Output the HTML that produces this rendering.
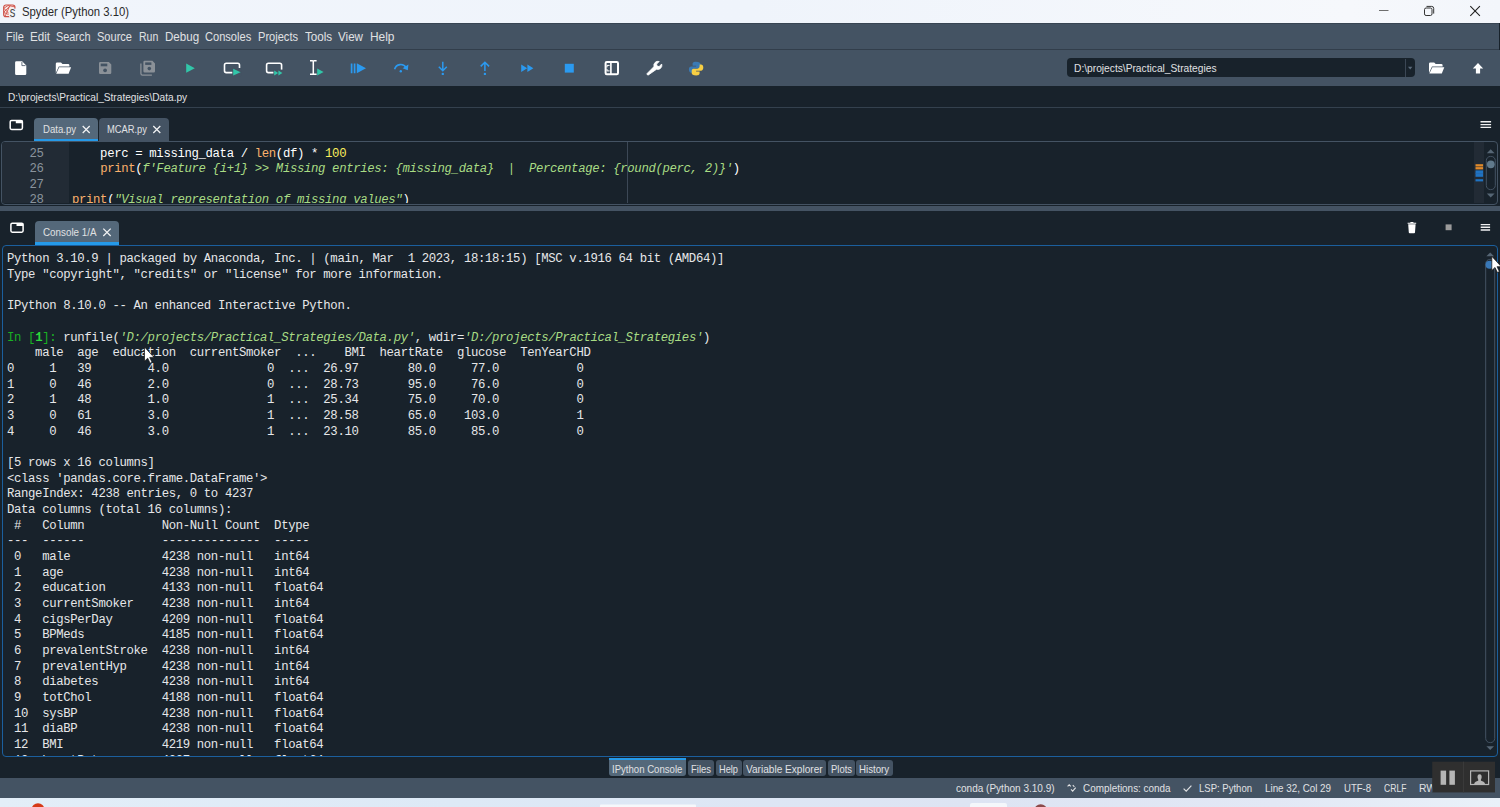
<!DOCTYPE html>
<html lang="en">
<head>
<meta charset="utf-8">
<title>Spyder (Python 3.10)</title>
<style>
*{box-sizing:border-box;margin:0;padding:0}
html,body{width:1500px;height:807px;overflow:hidden;background:#18222b}
body{position:relative;font-family:"Liberation Sans",sans-serif;font-size:12px;color:#e0e1e3}
.abs,.t,.ic{position:absolute}
.t{white-space:nowrap;line-height:1;color:#e0e1e3}
.ic{overflow:visible}
#titlebar{left:0;top:0;width:1500px;height:22.6px;background:linear-gradient(90deg,#f1f5fb,#eff4fb 50%,#f6f8fc 90%,#f3f6fb)}
#menubar{left:0;top:22.6px;width:1499px;height:27.4px;background:#445363;border-bottom:1px solid #323e4b;border-top:1px solid #384553}
#toolbar{left:0;top:50px;width:1500px;height:36px;background:#445363}
#pathrow{left:0;top:86px;width:1500px;height:22px;background:#18222b;border-bottom:1px solid #34414e}
.tab{position:absolute;background:#445363;border-radius:4px 4px 0 0}
.tab.sel{background:#54687a;border-bottom:3px solid #259ae9}
.mono{font-family:"Liberation Mono","DejaVu Sans Mono",monospace;font-size:12.3px;letter-spacing:-0.35px;white-space:pre;line-height:15.645px;color:#e6e7e9}
#editor{left:1px;top:141px;width:1497px;height:63.5px;border:1px solid #445363;border-radius:4px;background:#18222b;overflow:hidden}
#gutter{left:0;top:0;width:67px;height:64px;background:#222b35}
#edge{left:625px;top:0;width:1px;height:64px;background:#3c4856}
#flags{left:1472px;top:0;width:10px;height:64px;background:#222b35}
#splitter{left:0;top:205.6px;width:1500px;height:5.6px;background:#445363}
#console{left:2px;top:245px;width:1496px;height:512.4px;border:1.5px solid #1b5f9d;border-radius:4px;background:#18222b;overflow:hidden}
#statusbar{left:0;top:778px;width:1500px;height:20px;background:#445363}
#taskbar{left:0;top:797.5px;width:1500px;height:10px;background:linear-gradient(90deg,#e3eef8,#dde9f6 30%,#dde4f3 65%,#e2e8f5 85%,#e9f1f9)}
.btab{position:absolute;top:760px;height:16px;background:#445363;border-radius:3px}
.kw{color:#fab16c}.num{color:#faed5c}.str{color:#a8dc84;font-style:italic}
.pr{color:#18b024}.prn{color:#2bd93c;font-weight:bold}
.ln{color:#8a939c}
</style>
</head>
<body>

<div id="titlebar" class="abs"></div>
<div id="menubar" class="abs"></div>
<div id="toolbar" class="abs"></div>
<div id="pathrow" class="abs"></div>
<div class="abs" style="left:1066.5px;top:58.1px;width:348.5px;height:19px;background:#18222b;border-radius:4px"></div>
<div class="abs" style="left:1404.5px;top:58.6px;width:1px;height:18px;background:#3b4755"></div>
<div class="tab sel" style="left:34px;top:118px;width:63.5px;height:24px"></div>
<div class="tab" style="left:99px;top:118px;width:70px;height:22.5px"></div>
<div id="splitter" class="abs"></div>
<div class="tab sel" style="left:35px;top:221px;width:84px;height:24px"></div>
<div id="statusbar" class="abs"></div>
<div id="taskbar" class="abs"></div>
<div class="btab" style="left:608.5px;width:77.5px;top:758px;height:18px;background:#54687a;border-top:2.5px solid #259ae9;border-radius:0 0 3px 3px"></div>
<div class="btab" style="left:687.5px;width:26.5px"></div>
<div class="btab" style="left:715.5px;width:26px"></div>
<div class="btab" style="left:743px;width:83px"></div>
<div class="btab" style="left:827.5px;width:27px"></div>
<div class="btab" style="left:856px;width:37px"></div>

<span class="t" id="ttl" style="left:22px;top:5.50px;font-size:12.4px;color:#2a2a2a;transform:scaleX(0.9138);transform-origin:0 0;">Spyder (Python 3.10)</span>
<span class="t" id="m1" style="left:5.5px;top:30.58px;font-size:12.3px;color:#e0e1e3;transform:scaleX(0.8977);transform-origin:0 0;">File</span>
<span class="t" id="m2" style="left:30px;top:30.58px;font-size:12.3px;color:#e0e1e3;transform:scaleX(0.9433);transform-origin:0 0;">Edit</span>
<span class="t" id="m3" style="left:56.3px;top:30.58px;font-size:12.3px;color:#e0e1e3;transform:scaleX(0.8853);transform-origin:0 0;">Search</span>
<span class="t" id="m4" style="left:97px;top:30.58px;font-size:12.3px;color:#e0e1e3;transform:scaleX(0.8982);transform-origin:0 0;">Source</span>
<span class="t" id="m5" style="left:138.7px;top:30.58px;font-size:12.3px;color:#e0e1e3;transform:scaleX(0.8554);transform-origin:0 0;">Run</span>
<span class="t" id="m6" style="left:164.7px;top:30.58px;font-size:12.3px;color:#e0e1e3;transform:scaleX(0.9407);transform-origin:0 0;">Debug</span>
<span class="t" id="m7" style="left:205.3px;top:30.58px;font-size:12.3px;color:#e0e1e3;transform:scaleX(0.9012);transform-origin:0 0;">Consoles</span>
<span class="t" id="m8" style="left:258px;top:30.58px;font-size:12.3px;color:#e0e1e3;transform:scaleX(0.9005);transform-origin:0 0;">Projects</span>
<span class="t" id="m9" style="left:304.8px;top:30.58px;font-size:12.3px;color:#e0e1e3;transform:scaleX(0.9471);transform-origin:0 0;">Tools</span>
<span class="t" id="m10" style="left:338px;top:30.58px;font-size:12.3px;color:#e0e1e3;transform:scaleX(0.9456);transform-origin:0 0;">View</span>
<span class="t" id="m11" style="left:370px;top:30.58px;font-size:12.3px;color:#e0e1e3;transform:scaleX(0.9685);transform-origin:0 0;">Help</span>
<span class="t" id="pth" style="left:7.5px;top:92.41px;font-size:10.7px;color:#e0e1e3;transform:scaleX(0.9486);transform-origin:0 0;">D:\projects\Practical_Strategies\Data.py</span>
<span class="t" id="cwd" style="left:1073.5px;top:63.11px;font-size:10.7px;color:#e0e1e3;transform:scaleX(0.9558);transform-origin:0 0;">D:\projects\Practical_Strategies</span>
<span class="t" id="tb1" style="left:42.5px;top:124.11px;font-size:10.7px;color:#e0e1e3;transform:scaleX(0.8957);transform-origin:0 0;">Data.py</span>
<span class="t" id="tb2" style="left:107px;top:124.11px;font-size:10.7px;color:#e0e1e3;transform:scaleX(0.8746);transform-origin:0 0;">MCAR.py</span>
<span class="t" id="tb3" style="left:43px;top:227.11px;font-size:10.7px;color:#e0e1e3;transform:scaleX(0.9187);transform-origin:0 0;">Console 1/A</span>
<span class="t" id="b1" style="left:612px;top:763.91px;font-size:10.7px;color:#e0e1e3;transform:scaleX(0.8975);transform-origin:0 0;">IPython Console</span>
<span class="t" id="b2" style="left:691px;top:763.91px;font-size:10.7px;color:#e0e1e3;transform:scaleX(0.8858);transform-origin:0 0;">Files</span>
<span class="t" id="b3" style="left:719px;top:763.91px;font-size:10.7px;color:#e0e1e3;transform:scaleX(0.8643);transform-origin:0 0;">Help</span>
<span class="t" id="b4" style="left:746px;top:763.91px;font-size:10.7px;color:#e0e1e3;transform:scaleX(0.9435);transform-origin:0 0;">Variable Explorer</span>
<span class="t" id="b5" style="left:830.6px;top:763.91px;font-size:10.7px;color:#e0e1e3;transform:scaleX(0.8836);transform-origin:0 0;">Plots</span>
<span class="t" id="b6" style="left:859.4px;top:763.91px;font-size:10.7px;color:#e0e1e3;transform:scaleX(0.9078);transform-origin:0 0;">History</span>
<span class="t" id="s1" style="left:956.4px;top:783.11px;font-size:10.7px;color:#e0e1e3;transform:scaleX(0.9375);transform-origin:0 0;">conda (Python 3.10.9)</span>
<span class="t" id="s2" style="left:1083.4px;top:783.11px;font-size:10.7px;color:#e0e1e3;transform:scaleX(0.9273);transform-origin:0 0;">Completions: conda</span>
<span class="t" id="s3" style="left:1199.4px;top:783.11px;font-size:10.7px;color:#e0e1e3;transform:scaleX(0.8919);transform-origin:0 0;">LSP: Python</span>
<span class="t" id="s4" style="left:1265px;top:783.11px;font-size:10.7px;color:#e0e1e3;transform:scaleX(0.9179);transform-origin:0 0;">Line 32, Col 29</span>
<span class="t" id="s5" style="left:1344px;top:783.11px;font-size:10.7px;color:#e0e1e3;transform:scaleX(0.8916);transform-origin:0 0;">UTF-8</span>
<span class="t" id="s6" style="left:1383.6px;top:783.11px;font-size:10.7px;color:#e0e1e3;transform:scaleX(0.8022);transform-origin:0 0;">CRLF</span>
<span class="t" id="s7" style="left:1419px;top:783.11px;font-size:10.7px;color:#e0e1e3;transform:scaleX(0.9645);transform-origin:0 0;">RW</span>
<svg class="ic" style="left:0;top:0" width="1500" height="807" viewBox="0 0 1500 807">
<!-- app icon -->
<g>
<rect x="3.7" y="5" width="11.2" height="11.6" rx="2.2" fill="#f8eae8" stroke="#cc5047" stroke-width="1.2"/>
<path d="M4 8.2l4.2-2.8M4 12l6.5-6.6M5.2 16l4.3-9.6M4 12.5l4.5 2M4.2 8.5l4.6 5M8 5.5l6 1.2" stroke="#d4574e" stroke-width="0.9" fill="none"/>
<rect x="9.2" y="8.6" width="7" height="9" fill="#f1f5fb"/>
<text transform="translate(9.7 17) scale(0.8 1)" font-family="Liberation Sans, sans-serif" font-size="14" fill="#484848">s</text>
</g>
<!-- window controls -->
<path d="M1379 10.5h9.5" stroke="#6e6e6e" stroke-width="1"/>
<rect x="1424.5" y="8" width="7.5" height="7.5" rx="1.6" fill="none" stroke="#333" stroke-width="1"/>
<path d="M1426.5 6.4h5.2a2 2 0 0 1 2 2v5.2" fill="none" stroke="#333" stroke-width="1"/>
<path d="M1470.3 6.2l9.6 9.6M1479.9 6.2l-9.6 9.6" stroke="#222" stroke-width="1.1"/>
<!-- 1 new file -->
<path d="M16.4 61.2h5.7l4.2 4.2v8.3a1.3 1.3 0 0 1-1.3 1.3h-8.6a1.3 1.3 0 0 1-1.3-1.3v-11.2a1.3 1.3 0 0 1 1.3-1.3z" fill="#fff"/>
<path d="M21.9 62v3.6h3.6" fill="none" stroke="#556273" stroke-width="0.9"/>
<!-- 2 open folder -->
<path d="M55.8 63.8a1.3 1.3 0 0 1 1.3-1.3h3.9l1.5 1.5h5.6a1.3 1.3 0 0 1 1.3 1.3v1.2h-10.6l-3 6.6z" fill="#fff"/>
<path d="M59.2 67.2h11.9l-2.5 6.5h-12.4z" fill="#fff"/>
<!-- 3 save (disabled) -->
<path d="M100.2 62h8.6l2.5 2.5v8.3a1.2 1.2 0 0 1-1.2 1.2h-9.9a1.2 1.2 0 0 1-1.2-1.2v-9.6a1.2 1.2 0 0 1 1.2-1.2z" fill="#8b9198"/>
<rect x="100.7" y="63.6" width="6.6" height="2.7" fill="#445363"/>
<circle cx="105.1" cy="70.3" r="1.9" fill="#445363"/>
<!-- 4 save all (disabled) -->
<path d="M140.9 63.4v10.1a1.6 1.6 0 0 0 1.6 1.6h9.4" fill="none" stroke="#8b9198" stroke-width="1.3"/>
<path d="M144.6 60.8h7.8l2.6 2.6v7.9a1.2 1.2 0 0 1-1.2 1.2h-9.2a1.2 1.2 0 0 1-1.2-1.2v-9.3a1.2 1.2 0 0 1 1.2-1.2z" fill="#8b9198"/>
<rect x="145.2" y="62.4" width="6.2" height="2.5" fill="#445363"/>
<circle cx="149.3" cy="68.6" r="1.8" fill="#445363"/>
<!-- 5 run -->
<path d="M186.2 63.6l8.6 4.6l-8.6 4.6z" fill="#32c6a9"/>
<!-- 6 run cell -->
<rect x="224.5" y="63.3" width="15" height="9.3" rx="1.8" fill="none" stroke="#fff" stroke-width="1.6"/>
<path d="M232.3 68h9v8.2h-9z" fill="#445363"/>
<path d="M233.2 68.8l7.4 3.4l-7.4 3.4z" fill="#32c6a9"/>
<!-- 7 run cell advance -->
<rect x="266.6" y="63.3" width="15" height="9.3" rx="1.8" fill="none" stroke="#fff" stroke-width="1.6"/>
<path d="M273.4 69.6h10v7h-10z" fill="#445363"/>
<path d="M274.2 70.4l4 2.6l-4 2.6zM278.4 70.4l4 2.6l-4 2.6z" fill="#32c6a9"/>
<!-- 8 run selection -->
<path d="M310 60.8h2.4q0.9 0 0.9 0.8q0-0.8 0.9-0.8h2.4M310 74.2h2.4q0.9 0 0.9-0.8q0 0.8 0.9 0.8h2.4M313.3 61.4v12.2" fill="none" stroke="#fff" stroke-width="1.5"/>
<path d="M317.2 68.4l6.4 3.6l-6.4 3.6z" fill="#32c6a9"/>
<!-- 9 debug -->
<path d="M351.6 63.4v9.8M354.6 63.4v9.8" stroke="#2b9af0" stroke-width="1.7"/>
<path d="M356.8 63.3l9.2 5l-9.2 5z" fill="#2b9af0"/>
<!-- 10 step over -->
<path d="M394.6 69.2a6.3 6.3 0 0 1 11.6-1.4" fill="none" stroke="#2b9af0" stroke-width="1.6"/>
<path d="M408.4 64.6l-0.6 5.6l-5.2-1.9z" fill="#2b9af0"/>
<circle cx="400.8" cy="71.3" r="1.2" fill="#2b9af0"/>
<!-- 11 step into -->
<path d="M442.8 61.8v8.6M438.8 66.8l4 4l4-4" fill="none" stroke="#2b9af0" stroke-width="1.5"/>
<circle cx="442.8" cy="73.9" r="1.2" fill="#2b9af0"/>
<!-- 12 step out -->
<path d="M484.9 71v-8.6M480.7 66.4l4.2-4.2l4.2 4.2" fill="none" stroke="#2b9af0" stroke-width="1.5"/>
<circle cx="484.9" cy="73.9" r="1.2" fill="#2b9af0"/>
<!-- 13 continue -->
<path d="M521.2 64.5l6 3.8l-6 3.8zM527.4 64.5l6 3.8l-6 3.8z" fill="#2b9af0"/>
<!-- 14 stop -->
<rect x="564.8" y="63.8" width="9" height="8.8" fill="#2b9af0"/>
<!-- 15 maximize pane -->
<rect x="605.6" y="62" width="12.4" height="12.3" rx="1.2" fill="none" stroke="#fff" stroke-width="2"/>
<path d="M610.9 62v12.3" stroke="#fff" stroke-width="1.6"/>
<path d="M607 67.3v-1.9h2.6M607 69v1.9h2.6" fill="none" stroke="#fff" stroke-width="1"/>
<!-- 16 wrench -->
<path d="M648 75.2l-1.3-1.3l7.3-7.3a4.1 4.1 0 0 1 5.2-5.1l-2.6 2.6l0.5 2l2 0.5l2.6-2.6a4.1 4.1 0 0 1-5.1 5.2z" fill="#fff" stroke="#fff" stroke-width="0.8" stroke-linejoin="round"/>
<!-- 17 python -->
<path d="M695.9 61.7c-3 0-3.3 1.3-3.3 2.4v1.7h3.5v0.6h-4.9c-1.4 0-2.3 1.2-2.3 3.2s0.9 3.2 2.3 3.2h1.4v-1.9c0-1.4 1.2-2.4 2.5-2.4h3.4c1.1 0 2-0.9 2-2v-2.4c0-1.3-1.3-2.4-4.6-2.4z" fill="#3a7ab5"/>
<path d="M696.3 75.5c3 0 3.3-1.3 3.3-2.4v-1.7h-3.5v-0.6h4.9c1.4 0 2.3-1.2 2.3-3.2s-0.9-3.2-2.3-3.2h-1.4v1.9c0 1.4-1.2 2.4-2.5 2.4h-3.4c-1.1 0-2 0.9-2 2v2.4c0 1.3 1.3 2.4 4.6 2.4z" fill="#f7ce43"/>
<!-- cwd folder + up -->
<path d="M1429 63.8a1.3 1.3 0 0 1 1.3-1.3h3.9l1.5 1.5h5.6a1.3 1.3 0 0 1 1.3 1.3v1.2h-10.6l-3 6.4z" fill="#fff"/>
<path d="M1432.4 67.2h11.9l-2.5 6.3h-12.4z" fill="#fff"/>
<path d="M1478 63l5.2 5.4h-3.1v5.2h-4.2v-5.2h-3.1z" fill="#fff"/>
<path d="M1408 66.8h4.4l-2.2 2.6z" fill="#5b6b7b"/>
<!-- pane icons -->
<g fill="none" stroke="#fff" stroke-width="1.5">
<rect x="10.2" y="120.4" width="12.2" height="9" rx="1.4"/>
<rect x="10.9" y="223.2" width="12.2" height="9" rx="1.4"/>
</g>
<path d="M15.8 120.2h6.6v3h-6.6zM16.5 223h6.6v3h-6.6z" fill="#fff"/>
<!-- tab close X -->
<g stroke="#f2f3f4" stroke-width="1.25" fill="none">
<path d="M82.7 126l7 7M89.7 126l-7 7"/>
<path d="M153.3 126l7 7M160.3 126l-7 7"/>
<path d="M103.3 228.6l7.4 7.4M110.7 228.6l-7.4 7.4"/>
</g>
<!-- hamburgers -->
<g stroke="#f0f1f2" stroke-width="1.4">
<path d="M1480.5 121.8h10.6M1480.5 124.6h10.6M1480.5 127.4h10.6"/>
<path d="M1480.7 224.6h9.4M1480.7 227.3h9.4M1480.7 230h9.4"/>
</g>
<!-- console corner: trash, stop -->
<path d="M1408.2 224.2h7.4l-0.6 8.2a0.9 0.9 0 0 1-0.9 0.8h-4.4a0.9 0.9 0 0 1-0.9-0.8z" fill="#fff"/>
<path d="M1407.6 223.3h8.6M1410.4 222.6h3" stroke="#fff" stroke-width="1.1"/>
<rect x="1445.6" y="224.4" width="6" height="5.8" fill="#9b9b9b"/>
<!-- status icons -->
<path d="M1067.6 786.4l1.6-1.6l1.6 1.6M1071 789.4l1.7 1.7l3-3.4M1072.8 785.2l1.6 1.6" fill="none" stroke="#e0e1e3" stroke-width="1.1"/>
<path d="M1183.6 788.6l2.6 2.6l5.2-5.6" fill="none" stroke="#e0e1e3" stroke-width="1.2"/>
<!-- overlay buttons -->
<rect x="1432.2" y="761.7" width="62.8" height="30.7" fill="#2f2f2f"/>
<path d="M1463.5 761.7v30.7" stroke="#3a3a3a" stroke-width="1"/>
<rect x="1440.6" y="770.6" width="5.5" height="14.2" fill="#b5b5b5"/>
<rect x="1449.4" y="770.6" width="5.5" height="14.2" fill="#b5b5b5"/>
<rect x="1470.6" y="770.9" width="18" height="13.6" fill="none" stroke="#b5b5b5" stroke-width="1.2"/>
<path d="M1474 784.4c0.4-2.6 2.6-3 4-3.6c0.6-0.4 0.2-1.6-0.2-2.4c-0.8-2 0-4.2 1.8-4.2s2.6 2.2 1.8 4.2c-0.4 0.8-0.8 2-0.2 2.4c1.4 0.6 3.6 1 4 3.6z" fill="#b5b5b5"/>
<!-- taskbar bits -->
<circle cx="38" cy="809.6" r="6.4" fill="#d63a17"/>
<circle cx="1040.7" cy="810.6" r="6.4" fill="#8c4a4a"/>
<rect x="970" y="803" width="37" height="6" rx="2" fill="#f4f7fb"/>
<rect x="600" y="804.5" width="96" height="4" rx="1" fill="#f6f8fb"/>
</svg>

<div id="editor" class="abs"><div class="abs" style="left:0;top:0;width:1495px;height:60.6px;overflow:hidden">
<div id="gutter" class="abs"></div>
<div id="edge" class="abs"></div>
<div id="flags" class="abs"></div>
<div class="abs mono ln" id="lnums" style="left:0;top:4.5px;width:41.5px;text-align:right">25
26
27
28</div>
<div class="abs mono" id="code" style="left:70px;top:4.5px;color:#fff">    perc = missing_data / <span class="kw">len</span>(df) * <span class="num">100</span>
    <span class="kw">print</span>(<span class="str">f'Feature {i+1} &gt;&gt; Missing entries: {missing_data}  |  Percentage: {round(perc, 2)}'</span>)

<span class="kw">print</span>(<span class="str">"Visual representation of missing values"</span>)</div>
</div></div>
<svg class="ic" style="left:1470px;top:141px" width="30" height="66" viewBox="1470 141 30 66">
<rect x="1475.5" y="164.2" width="7.6" height="2.3" fill="#e08a2b"/>
<rect x="1475.5" y="167.1" width="7.6" height="2.3" fill="#e08a2b"/>
<rect x="1475.5" y="170.4" width="7.6" height="6.4" fill="#1f73c2"/>
<path d="M1475.5 173.6h7.6" stroke="#2a63a0" stroke-width="0.6"/>
<rect x="1475.5" y="179.2" width="7.6" height="2.2" fill="#1f73c2"/>
<path d="M1486.8 153.2l3.9-3.9l3.9 3.9z" fill="#566675"/>
<path d="M1486.8 193.6l3.9 3.9l3.9-3.9z" fill="#566675"/>
<rect x="1486.3" y="156.4" width="9" height="33.2" rx="4.2" fill="none" stroke="#445363" stroke-width="1"/>
<circle cx="1490.8" cy="164.3" r="3.9" fill="#60798b"/>
</svg>

<div id="console" class="abs"><div class="abs" style="left:0;top:0;width:1480px;height:509.8px;overflow:hidden"><div class="abs mono" id="ctext" style="left:4px;top:6.2px;line-height:15.665px">Python 3.10.9 | packaged by Anaconda, Inc. | (main, Mar  1 2023, 18:18:15) [MSC v.1916 64 bit (AMD64)]
Type "copyright", "credits" or "license" for more information.

IPython 8.10.0 -- An enhanced Interactive Python.

<span class="pr">In [</span><span class="prn">1</span><span class="pr">]:</span> runfile(<span class="str">'D:/projects/Practical_Strategies/Data.py'</span>, wdir=<span class="str">'D:/projects/Practical_Strategies'</span>)
    male  age  education  currentSmoker  ...    BMI  heartRate  glucose  TenYearCHD
0     1   39        4.0              0  ...  26.97       80.0     77.0           0
1     0   46        2.0              0  ...  28.73       95.0     76.0           0
2     1   48        1.0              1  ...  25.34       75.0     70.0           0
3     0   61        3.0              1  ...  28.58       65.0    103.0           1
4     0   46        3.0              1  ...  23.10       85.0     85.0           0

[5 rows x 16 columns]
&lt;class 'pandas.core.frame.DataFrame'&gt;
RangeIndex: 4238 entries, 0 to 4237
Data columns (total 16 columns):
 #   Column           Non-Null Count  Dtype  
---  ------           --------------  -----  
 0   male             4238 non-null   int64  
 1   age              4238 non-null   int64  
 2   education        4133 non-null   float64
 3   currentSmoker    4238 non-null   int64  
 4   cigsPerDay       4209 non-null   float64
 5   BPMeds           4185 non-null   float64
 6   prevalentStroke  4238 non-null   int64  
 7   prevalentHyp     4238 non-null   int64  
 8   diabetes         4238 non-null   int64  
 9   totChol          4188 non-null   float64
 10  sysBP            4238 non-null   float64
 11  diaBP            4238 non-null   float64
 12  BMI              4219 non-null   float64
 13  heartRate        4237 non-null   float64</div></div></div>
<svg class="ic" style="left:1480px;top:245px" width="20" height="515" viewBox="1480 245 20 515">
<path d="M1486.4 256.2l3.8-3.8l3.8 3.8z" fill="#566675"/>
<path d="M1486.4 746.2l3.8 3.8l3.8-3.8z" fill="#566675"/>
<rect x="1485.7" y="259.4" width="9" height="483.2" rx="4.2" fill="none" stroke="#445363" stroke-width="1"/>
<circle cx="1489.6" cy="264.8" r="4" fill="#3878b8"/>
</svg>

<svg class="ic" style="left:0;top:0" width="1500" height="807" viewBox="0 0 1500 807">
<!-- mouse cursors -->
<path d="M144.5 347v14.2l3.2-3l2.4 5l2-0.9l-2.4-4.9h4.3z" fill="#fff" stroke="#111" stroke-width="0.7"/>
<path d="M1491.8 256.3v14.2l3.2-3l2.4 5l2-0.9l-2.4-4.9h4.3z" fill="#fff" stroke="#111" stroke-width="0.7"/>
</svg>
</body>
</html>
